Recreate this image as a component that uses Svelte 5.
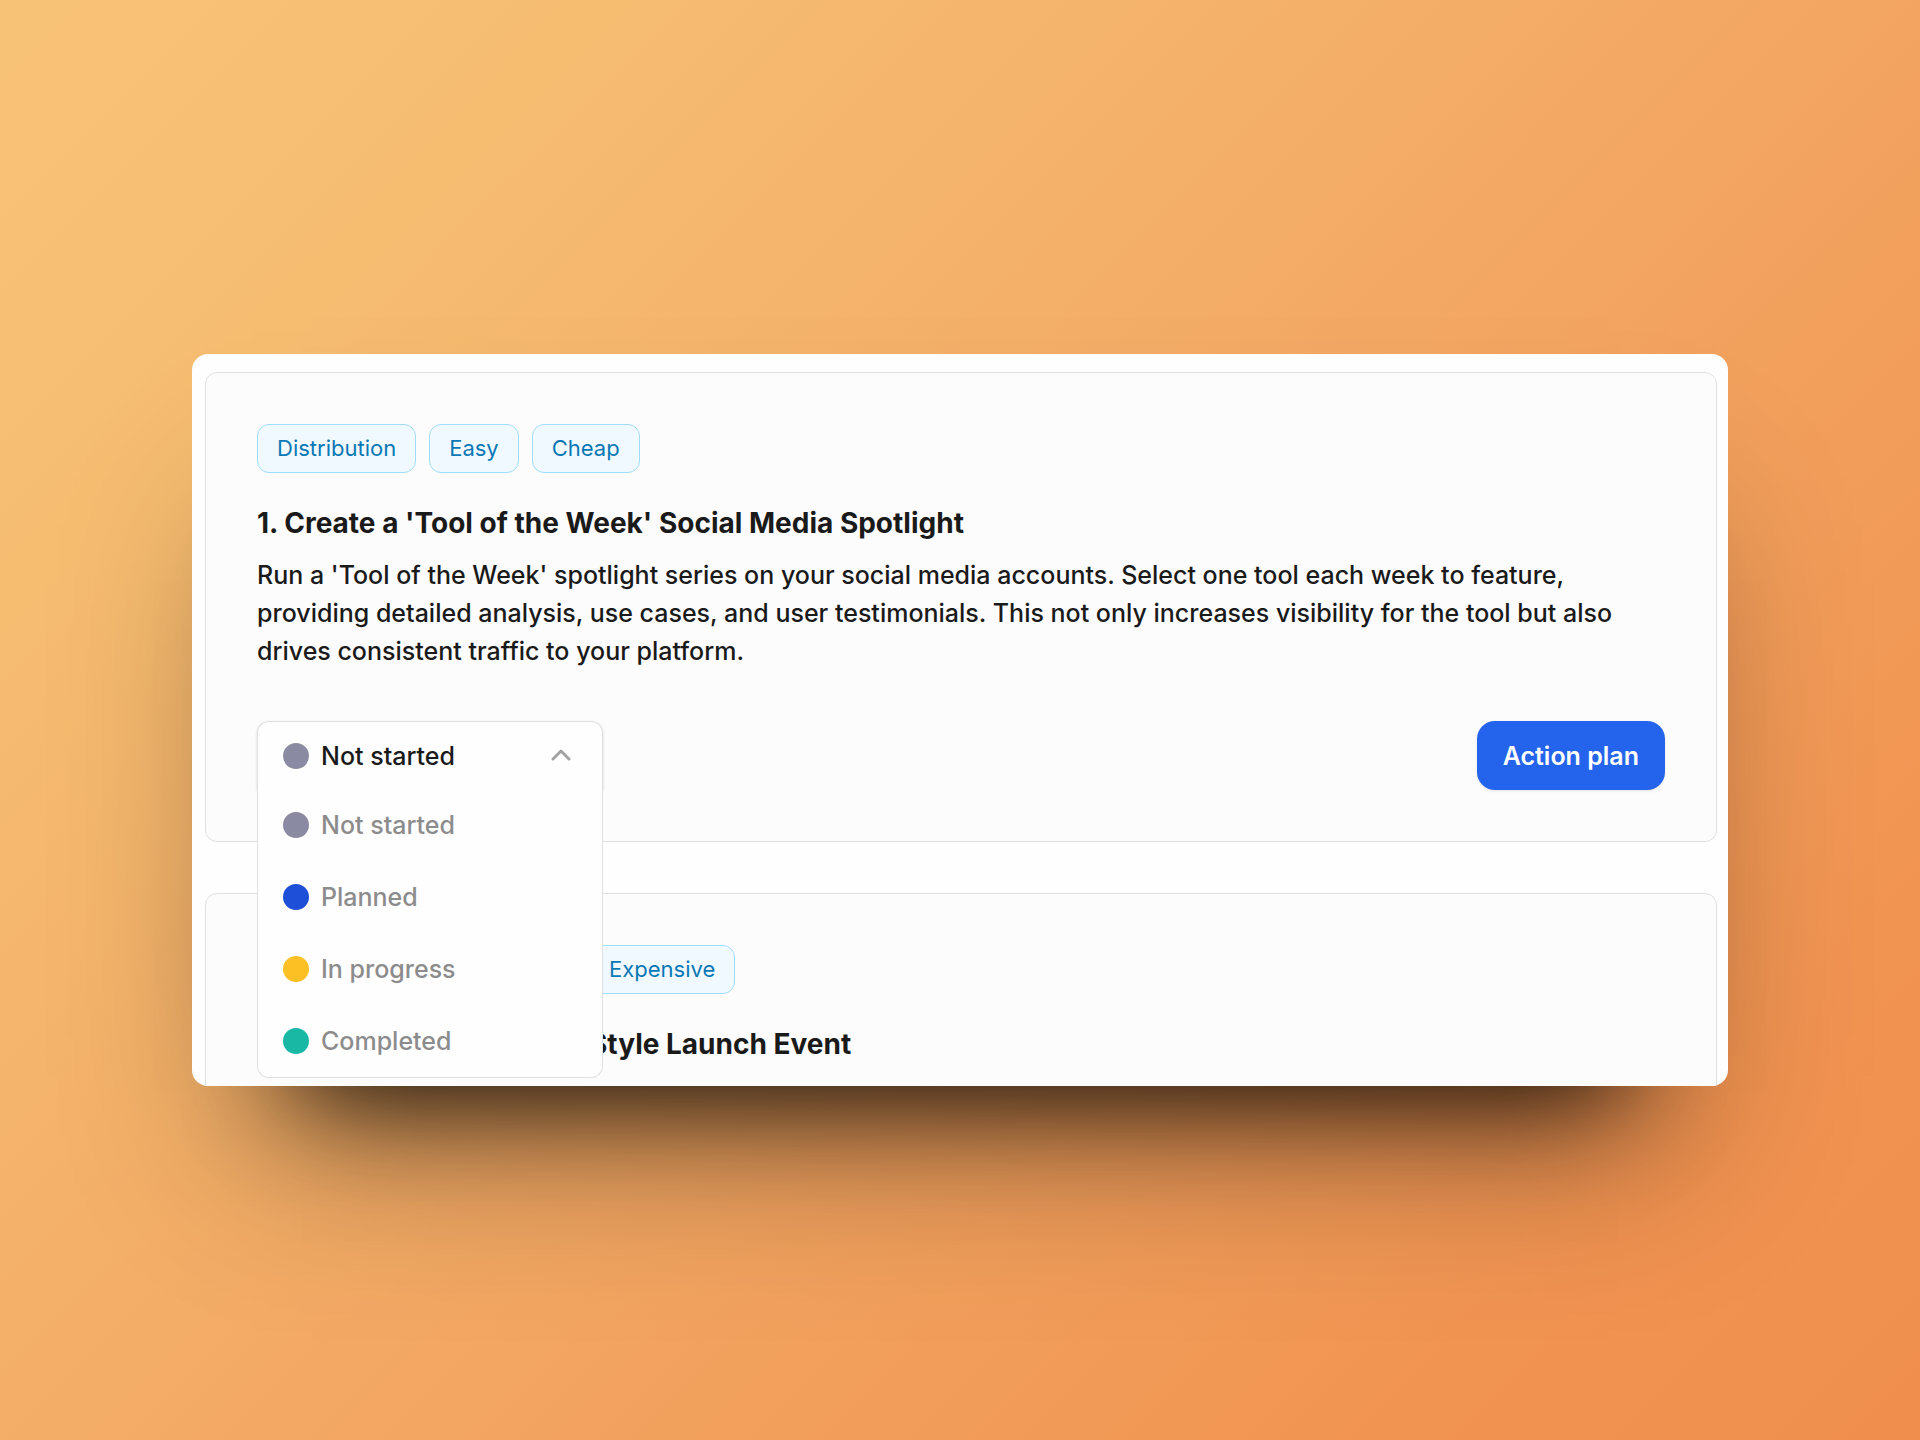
<script lang="ts">
    const statuses = [
        { id: 'not-started', label: 'Not started' },
        { id: 'planned', label: 'Planned' },
        { id: 'in-progress', label: 'In progress' },
        { id: 'completed', label: 'Completed' }
    ];

    const tags = ['Distribution', 'Easy', 'Cheap'];

    let status = $state('not-started');
    let open = $state(true);

    function toggle(event: MouseEvent) {
        event.preventDefault(); // we draw our own list instead of the native one
        open = !open;
    }

    function pick(id: string) {
        status = id;
        open = false;
    }
</script>

<main class="backdrop">
    <div class="window">
        <article class="card">
            <ul class="tags">
                {#each tags as tag}
                    <li class="tag">{tag}</li>
                {/each}
            </ul>
            <h2 class="title">1. Create a 'Tool of the Week' Social Media Spotlight</h2>
            <p class="text">
                Run a 'Tool of the Week' spotlight series on your social media accounts. Select one tool each week to
                feature, providing detailed analysis, use cases, and user testimonials. This not only increases
                visibility for the tool but also drives consistent traffic to your platform.
            </p>

            <div class="actions">
                <div class="dropdown">
                    <div class="trigger" class:open>
                        <span class="dot {status}"></span>
                        <select class="select" aria-label="Status" bind:value={status} onmousedown={toggle}>
                            {#each statuses as item}
                                <option value={item.id}>{item.label}</option>
                            {/each}
                        </select>
                        <svg class="chevron" class:flip={!open} viewBox="0 0 20 14" aria-hidden="true">
                            <path d="M2 10l8-8 8 8" />
                        </svg>
                    </div>
                    {#if open}
                        <div class="menu">
                            {#each statuses as item}
                                <button class="option" type="button" onclick={() => pick(item.id)}>
                                    <span class="dot {item.id}"></span>
                                    {item.label}
                                </button>
                            {/each}
                        </div>
                    {/if}
                </div>
                <button class="plan" type="button">Action plan</button>
            </div>
        </article>

        <article class="card indented">
            <ul class="tags">
                <li class="tag">Expensive</li>
            </ul>
            <h2 class="title">Style Launch Event</h2>
        </article>
    </div>
</main>

<style>
:global(body) {
    margin: 0;
}

.backdrop {
    box-sizing: border-box;
    min-height: 100vh;
    padding: 48px 10%;
    display: flex;
    align-items: center;
    background: linear-gradient(135deg, #f8c276 0%, #f6bd71 18%, #f3a964 50%, #f19351 85%, #f08f4d 100%);
    font-family: Inter, "Liberation Sans", sans-serif;
    color: #1a1a1a;
}

/* Floating window, the second card runs out of its bottom edge */
.window {
    box-sizing: border-box;
    width: 100%;
    aspect-ratio: 1536 / 732;
    padding: 18px 11px 0 13px;
    overflow: hidden;
    display: flex;
    flex-direction: column;
    gap: 51px;
    background: #fefefe;
    border-radius: 16px;
    box-shadow:
        0 116px 100px -110px rgba(0, 0, 0, 0.85),
        0 110px 170px -60px rgba(0, 0, 0, 0.42);
}

.card {
    flex-shrink: 0;
    padding: 51px;
    background: #fcfcfc;
    border: 1px solid #e0e0e0;
    border-radius: 12px;
}

/* Starts beside the open menu */
.card.indented {
    padding-left: 383px;
}

/* Tags */
.tags {
    display: flex;
    gap: 13px;
    margin: 0;
    padding: 0;
    list-style: none;
}

.tag {
    padding: 0 19px;
    border: 1px solid #a0ddfc;
    border-radius: 12px;
    background: #f0f9ff;
    color: #0a78b5;
    font-size: 22px;
    line-height: 47px;
}

.title {
    margin: 32px 0 15px;
    font-size: 28px;
    line-height: 36px;
    font-weight: 700;
}

.text {
    margin: 0;
    font-size: 25px;
    line-height: 38px;
    font-weight: 500;
}

.actions {
    display: flex;
    justify-content: space-between;
    margin-top: 51px;
}

/* Status dropdown */
.dropdown {
    position: relative;
    width: 346px;
}

.trigger {
    box-sizing: border-box;
    display: flex;
    align-items: center;
    gap: 12px;
    height: 69px;
    padding: 0 31px 0 25px;
    border: 1px solid #e0e0e0;
    border-radius: 12px;
    background: #fefefe;
    box-shadow: 0 1px 3px rgba(0, 0, 0, 0.15);
}

.trigger.open {
    border-bottom-color: transparent;
    border-radius: 12px 12px 0 0;
}

.select {
    flex: 1;
    min-width: 0;
    padding: 0;
    border: none;
    outline: none;
    appearance: none;
    background: none;
    color: inherit;
    font: 500 25px/38px Inter, "Liberation Sans", sans-serif;
    cursor: pointer;
}

.chevron {
    width: 20px;
    height: 14px;
    fill: none;
    stroke: #a3a3a3;
    stroke-width: 3;
    stroke-linecap: round;
    stroke-linejoin: round;
}

.chevron.flip {
    transform: rotate(180deg);
}

.menu {
    position: absolute;
    z-index: 1;
    top: 68px;
    left: 0;
    right: 0;
    border: 1px solid #e0e0e0;
    border-top: none;
    border-radius: 0 0 12px 12px;
    background: #fefefe;
}

.option {
    display: flex;
    align-items: center;
    gap: 12px;
    width: 100%;
    height: 72px;
    padding: 0 25px;
    border: none;
    background: none;
    color: #8c8c8c;
    font: 500 25px/38px Inter, "Liberation Sans", sans-serif;
    cursor: pointer;
}

.dot {
    flex-shrink: 0;
    width: 26px;
    height: 26px;
    border-radius: 50%;
}

.dot.not-started {
    background: #8b8aa3;
}

.dot.planned {
    background: #1d4fd8;
}

.dot.in-progress {
    background: #fcbf24;
}

.dot.completed {
    background: #18b8a5;
}

.plan {
    height: 69px;
    padding: 0 26px;
    border: none;
    border-radius: 18px;
    background: #2464ec;
    color: #fefefe;
    font: 600 25px/38px Inter, "Liberation Sans", sans-serif;
    box-shadow: 0 1px 3px rgba(0, 0, 0, 0.1);
    cursor: pointer;
}
</style>
